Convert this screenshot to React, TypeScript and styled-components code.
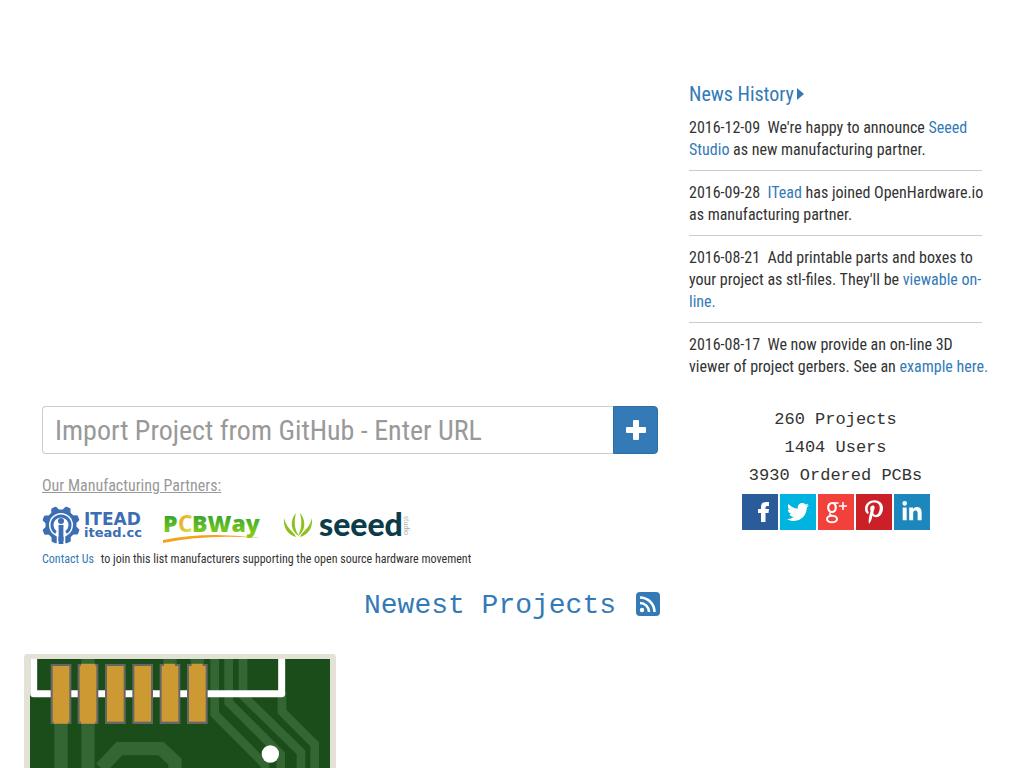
import React from "react";
import styled, { createGlobalStyle } from "styled-components";
import { FaTwitter, FaPinterestP, FaLinkedinIn } from "react-icons/fa";

const Global = createGlobalStyle`
  *, *::before, *::after { box-sizing: border-box; }
  body { margin: 0; background: #fff; color: #333; font: 16px/22px "Roboto Condensed", Roboto, sans-serif; }
  a { color: #337ab7; text-decoration: none; }
`;

const Page = styled.main`
  display: flex;
  flex-direction: column;
  height: 100vh;
  overflow: hidden;
`;

const Intro = styled.div`
  display: grid;
  grid-template-columns: minmax(0, 616fr) minmax(0, 293fr);
  column-gap: 31px;
  padding: 82px 42px 0;
`;

const Lead = styled.section`
  display: flex;
  flex-direction: column;
`;

const Slides = styled.div`
  height: 324px;
`;

const ImportForm = styled.form`
  display: flex;
  height: 48px;
`;

const UrlInput = styled.input`
  flex: 1;
  min-width: 0;
  padding: 2px 12px 0;
  border: 1px solid #ccc;
  border-right: 0;
  border-radius: 4px 0 0 4px;
  font: 28px/40px "Roboto Condensed", Roboto, sans-serif;
  color: #555;
  &::placeholder { color: #999; opacity: 1; }
`;

const AddButton = styled.button`
  display: flex;
  align-items: center;
  justify-content: center;
  width: 45px;
  padding: 0;
  border: 1px solid #2e6da4;
  border-radius: 0 4px 4px 0;
  background: #337ab7;
`;

const PartnersTitle = styled.h2`
  margin: 21px 0 7px;
  font-size: 16px;
  line-height: 22px;
  font-weight: 400;
  color: #999;
  text-decoration: underline;
`;

const Partners = styled.div`
  display: flex;
  align-items: center;
  gap: 20px;
  height: 42px;
  svg { display: block; }
`;

const Contact = styled.p`
  margin: 4px 0 0;
  font-size: 12px;
  line-height: 18px;
  a { margin-right: 4px; }
`;

const NewsTitle = styled.h2`
  margin: 0 0 11px;
  font-size: 20px;
  line-height: 24px;
  font-weight: 400;
  a { display: flex; align-items: center; gap: 3px; }
`;

const NewsItem = styled.article`
  padding-bottom: 9px;
  & + & { border-top: 1px solid #ccc; padding-top: 11px; }
`;

const NewsText = styled.p`
  margin: 0 -10px 0 0;
`;

const Stats = styled.div`
  margin-top: 19px;
  text-align: center;
  font: 17px/28px "Liberation Mono", monospace;
`;

const Social = styled.nav`
  display: flex;
  justify-content: center;
  gap: 2px;
  margin-top: 4px;
`;

const SocialLink = styled.a<{ $color: string; $size?: number }>`
  display: flex;
  align-items: center;
  justify-content: center;
  width: 36px;
  height: 36px;
  background: ${(p) => p.$color};
  color: #fff;
  font-size: ${(p) => p.$size ?? 22}px;
`;

const Newest = styled.h2`
  display: flex;
  justify-content: center;
  margin: 18px 0 0;
  font: 28px/40px "Liberation Mono", monospace;
  a { display: flex; align-items: center; gap: 20px; }
  svg { margin-bottom: 4px; }
`;

const Projects = styled.section`
  display: flex;
  flex: 1;
  min-height: 0;
  overflow: hidden;
  padding: 28px 24px 0;
`;

const Card = styled.a`
  width: 312px;
  border: solid #e4e1d6;
  border-width: 5px 6px 0;
  border-radius: 4px 4px 0 0;
  background: #1b4d1b;
  overflow: hidden;
  svg { display: block; width: 100%; }
`;

function Board() {
  return (
    <svg viewBox="45 42 900 327" role="img" aria-label="Circuit board">
      <rect x="45" y="42" width="900" height="327" fill="#1b4d1b" />
      <g fill="none" stroke="#336633" strokeWidth="26">
        <path d="M599 42V207L750 359V380M641 42V172L797 328V380M684 42V152L858 322V380M801 140V200L899 298V380" />
        <path strokeWidth="40" d="M138 230V380M219 42V380M258 369L313 311H438L480 350V380M465 42V80M547 42V80" />
      </g>
      <path d="M56 42V146H800V42" fill="none" stroke="#fff" strokeWidth="21" strokeLinejoin="round" />
      {[107, 188, 270, 352, 434, 516].map((x) => (
        <g key={x}>
          <rect x={x} y="57" width="62" height="180" fill="#666" />
          <rect x={x + 6} y="63" width="50" height="167" fill="#cc9933" />
        </g>
      ))}
      <path fill="#cc9933" d="M116 228h44v8h-44zM198 56h43v10h-43zM198 228h43v8h-43zM447 56h33v10h-33zM530 56h33v10h-33z" />
      <circle cx="766" cy="327" r="26" fill="#fff" />
    </svg>
  );
}

function IteadLogo() {
  return (
    <svg width="101" height="40" viewBox="0 0 101 40" role="img" aria-label="ITEAD">
      <g fill="#3c6eb4">
        <circle cx="19" cy="20" r="15.500" />
        {[0, 45, 90, 135, 180, 225, 270, 315].map((r) => (
          <path key={r} d="M14.500 6L16 2Q16.300 1 17.300 1H20.700Q21.700 1 22 2L23.500 6z" transform={`rotate(${r + 22} 19 20)`} />
        ))}
      </g>
      <circle cx="19" cy="20" r="12" fill="#fff" />
      <path d="M14 27.500A9 9 0 1 1 24 27.500" fill="none" stroke="#3c6eb4" strokeWidth="3" />
      <path d="M16.500 20h5v19h-5z" fill="#3c6eb4" />
      <path d="M15.500 22v17M22.500 22v17" stroke="#fff" strokeWidth="1.500" />
      <circle cx="19" cy="16" r="3" fill="#3c6eb4" />
      <g fill="#3c6eb4" fontFamily="DejaVu Sans, sans-serif" fontWeight="700">
        <text x="42" y="20" fontSize="17">ITEAD</text>
        <text x="42" y="32" fontSize="13">itead.cc</text>
      </g>
    </svg>
  );
}

function PcbwayLogo() {
  return (
    <svg width="100" height="40" viewBox="0 0 100 40" role="img" aria-label="PCBWay">
      <defs>
        <linearGradient id="leaf" x1="0" y1="0" x2="0" y2="1">
          <stop offset="0.2" stopColor="#2f9e2f" />
          <stop offset="0.8" stopColor="#7ccc1c" />
        </linearGradient>
        <linearGradient id="sun" x1="0" y1="0" x2="1" y2="1">
          <stop offset="0.2" stopColor="#f5a31d" />
          <stop offset="0.8" stopColor="#d9e04a" />
        </linearGradient>
      </defs>
      <g fontFamily="Open Sans, sans-serif" fontSize="23" fill="url(#leaf)">
        <text x="0" y="27" fontWeight="800">P</text>
        <text x="15" y="27" fontWeight="700" fill="url(#sun)">C</text>
        <text x="29" y="27" fontWeight="800">BWay</text>
      </g>
      <path d="M0 35Q45 26 96 33Q45 29 0 38z" fill="#f5a31d" />
    </svg>
  );
}

function SeeedLogo() {
  return (
    <svg width="128" height="40" viewBox="0 0 128 40" role="img" aria-label="Seeed Studio">
      <g fill="#8cc220">
        <path d="M1 13C0 23 5 30 13 32C11 26 4 25 1 13z" />
        <path d="M13 8C6 16 8 27 16 31C11 24 11 16 13 8z" />
        <path d="M29 13C30 23 25 30 17 32C19 26 26 25 29 13z" />
        <path d="M17 8C24 16 22 27 15 31C19 24 19 16 17 8z" />
      </g>
      <text x="36" y="31" fontFamily="Lato, sans-serif" fontWeight="900" fontSize="32" fill="#0b3c49">seeed</text>
      <text transform="translate(121 11) rotate(90)" fontFamily="Lato, sans-serif" fontSize="7" fill="#aaa">studio</text>
    </svg>
  );
}

function Facebook() {
  return (
    <svg width="24" height="24" viewBox="0 0 24 24" fill="#fff">
      <path d="M13 22V13H10V9H13V7Q13 2 18 2H21V6H19Q17.500 6 17.500 7.500V9H21L20.500 13H17.500V22z" />
    </svg>
  );
}

function GooglePlus() {
  return (
    <svg width="22" height="24" viewBox="0 0 22 24" fill="none" stroke="#fff">
      <ellipse cx="7" cy="7.500" rx="3.800" ry="4.500" strokeWidth="2.200" />
      <path strokeWidth="1.500" d="M7 3h6.500M6 12C4 13.500 4.500 15 7 15.700" />
      <ellipse cx="7" cy="19" rx="5" ry="3.300" strokeWidth="2" />
      <path strokeWidth="1.500" d="M14 6h8M18 2v8" />
    </svg>
  );
}

function Plus() {
  return (
    <svg width="20" height="20" viewBox="0 0 20 20" fill="#fff">
      <rect x="7" y="0" width="6" height="20" rx="1" />
      <rect x="0" y="7" width="20" height="6" rx="1" />
    </svg>
  );
}

function Caret() {
  return (
    <svg width="8" height="14" viewBox="0 0 8 14" fill="currentColor">
      <path d="M0 1L7 7L0 13z" />
    </svg>
  );
}

function Feed() {
  return (
    <svg width="24" height="24" viewBox="0 0 24 24">
      <rect width="24" height="24" rx="4" fill="currentColor" />
      <circle cx="6" cy="18" r="2.200" fill="#fff" />
      <path d="M4 11A9 9 0 0 1 13 20M4 5.500A14.500 14.500 0 0 1 18.500 20" fill="none" stroke="#fff" strokeWidth="2.500" />
    </svg>
  );
}

export default function App() {
  return (
    <Page>
      <Global />
      <Intro>
        <Lead>
          <Slides />
          <ImportForm onSubmit={(e) => e.preventDefault()}>
            <UrlInput aria-label="Project URL" placeholder="Import Project from GitHub - Enter URL" />
            <AddButton aria-label="Import"><Plus /></AddButton>
          </ImportForm>
          <PartnersTitle>Our Manufacturing Partners:</PartnersTitle>
          <Partners><IteadLogo /><PcbwayLogo /><SeeedLogo /></Partners>
          <Contact><a href="#contact">Contact Us</a> to join this list manufacturers supporting the open source hardware movement</Contact>
        </Lead>
        <aside>
          <NewsTitle><a href="#news">News History<Caret /></a></NewsTitle>
          <NewsItem>
            <NewsText>2016-12-09 &nbsp;We're happy to announce <a href="#seeed">Seeed Studio</a> as new manufacturing partner.</NewsText>
          </NewsItem>
          <NewsItem>
            <NewsText>2016-09-28 &nbsp;<a href="#itead">ITead</a> has joined OpenHardware.io as manufacturing partner.</NewsText>
          </NewsItem>
          <NewsItem>
            <NewsText>2016-08-21 &nbsp;Add printable parts and boxes to your project as stl-files. They'll be <a href="#viewer">viewable on-line.</a></NewsText>
          </NewsItem>
          <NewsItem>
            <NewsText>2016-08-17 &nbsp;We now provide an on-line 3D viewer of project gerbers. See an <a href="#example">example here.</a></NewsText>
          </NewsItem>
          <Stats>
            <div>260 Projects</div>
            <div>1404 Users</div>
            <div>3930 Ordered PCBs</div>
          </Stats>
          <Social>
            <SocialLink href="#facebook" aria-label="Facebook" $color="#2a5c9a"><Facebook /></SocialLink>
            <SocialLink href="#twitter" aria-label="Twitter" $color="#00b4e0"><FaTwitter /></SocialLink>
            <SocialLink href="#google" aria-label="Google Plus" $color="#f2403a"><GooglePlus /></SocialLink>
            <SocialLink href="#pinterest" aria-label="Pinterest" $color="#cb2027" $size={24}><FaPinterestP /></SocialLink>
            <SocialLink href="#linkedin" aria-label="LinkedIn" $color="#1c87bd"><FaLinkedinIn /></SocialLink>
          </Social>
        </aside>
      </Intro>
      <Newest><a href="#feed">Newest Projects<Feed /></a></Newest>
      <Projects><Card href="#project"><Board /></Card></Projects>
    </Page>
  );
}
